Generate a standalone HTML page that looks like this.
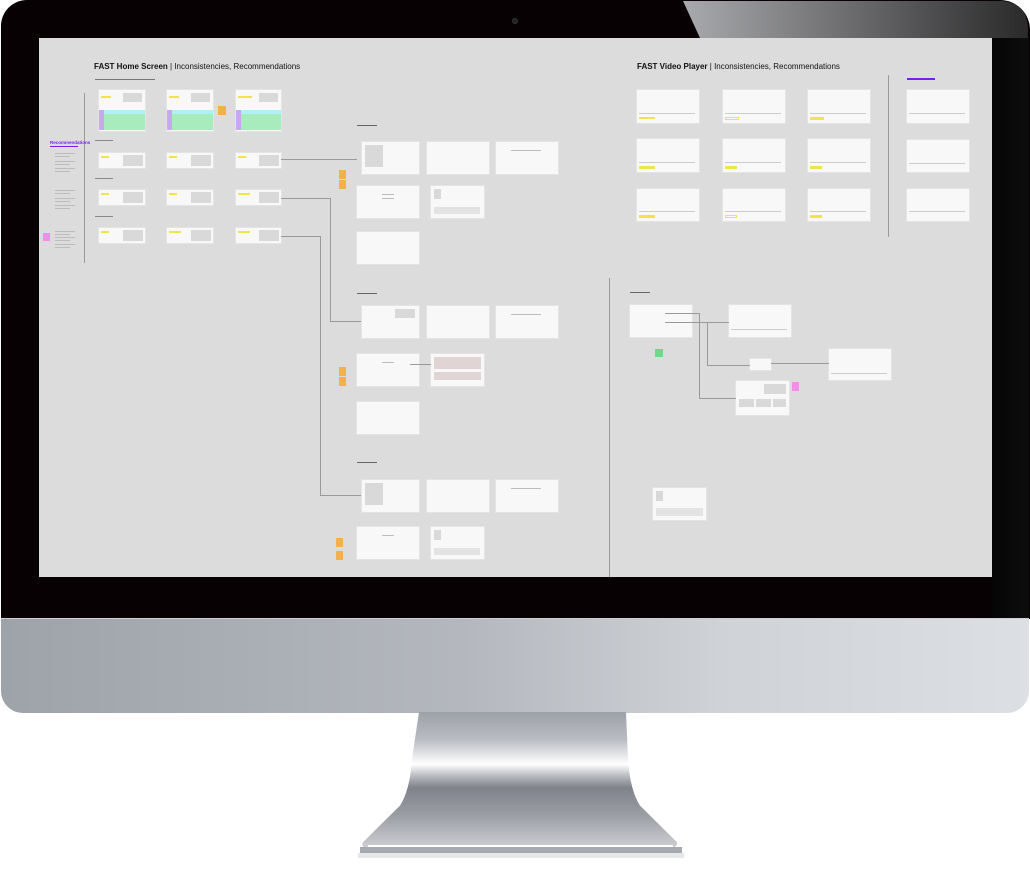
<!DOCTYPE html>
<html><head><meta charset="utf-8">
<style>
*{margin:0;padding:0;box-sizing:border-box}
body{width:1030px;height:888px;background:#fff;position:relative;overflow:hidden;font-family:"Liberation Sans",sans-serif}
.a{position:absolute}
.f{position:absolute;background:#f8f8f8;box-shadow:0 0 0 1px #e4e4e4}
.ph{position:absolute;background:#d9d9d9}
.t{position:absolute;background:#bcbcbc;height:1px}
.y{position:absolute;background:#f1e34a;height:2px}
.ln{position:absolute;background:#9a9a9a}
.so{position:absolute;background:#f5b04a;width:7px;height:9px}
</style></head><body>
<!-- bezel -->
<div class="a" style="left:1px;top:0;width:1029px;height:619px;background:#070104;border-radius:26px 30px 0 0"></div>
<svg class="a" style="left:0;top:0" width="1030" height="40"><defs><linearGradient id="g1" x1="0" x2="1"><stop offset="0" stop-color="#a9aaad"/><stop offset=".5" stop-color="#6a6a6c"/><stop offset="1" stop-color="#2a2a2b"/></linearGradient></defs><path d="M683 1 L1002 1 Q1028 3 1028 30 L1028 38 L700 38 Z" fill="url(#g1)"/></svg>
<div class="a" style="left:992px;top:38px;width:37px;height:580px;background:linear-gradient(90deg,#050505,#0d0d0d)"></div>
<div class="a" style="left:512px;top:18px;width:6px;height:6px;border-radius:50%;background:#222;border:1px solid #333"></div>
<!-- screen -->
<div class="a" style="left:39px;top:38px;width:953px;height:539px;background:#dcdcdc;overflow:hidden"></div>
<!-- chin -->
<div class="a" style="left:1px;top:618px;width:1028px;height:95px;border-radius:0 0 22px 22px;background:linear-gradient(90deg,#9ea3aa,#b4b8be 45%,#cfd2d6 70%,#dcdfe3)"></div>
<div class="a" style="left:1px;top:618px;width:1028px;height:1px;background:#cfcfcf"></div>
<!-- stand -->
<svg class="a" style="left:0;top:712px" width="1030" height="150"><defs><linearGradient id="g2" x1="0" y1="0" x2="0" y2="1"><stop offset="0" stop-color="#9da1a8"/><stop offset=".2" stop-color="#b9bcc2"/><stop offset=".38" stop-color="#ffffff"/><stop offset=".45" stop-color="#c4c6ca"/><stop offset=".55" stop-color="#7f828a"/><stop offset=".75" stop-color="#9a9da4"/><stop offset=".88" stop-color="#b6b8bd"/><stop offset="1" stop-color="#cfd0d3"/></linearGradient></defs>
<path d="M419 0 L626 0 L628 60 Q630 100 640 120 L677 167 Q678 175 665 176 L372 176 Q360 175 363 167 L400 120 Q410 100 412 60 Z" fill="url(#g2)" transform="scale(1,0.78)"/>
<rect x="368" y="133" width="305" height="2" fill="#fff"/>
<rect x="360" y="135" width="322" height="6" fill="#a6a9ae"/>
<rect x="358" y="141" width="326" height="5" fill="#e6e7e9"/>
</svg>

<!-- LEFT SECTION -->
<div class="a" style="left:94px;top:62px;font-size:8px;color:#111;white-space:nowrap"><b>FAST Home Screen</b> | Inconsistencies, Recommendations</div>
<div class="t" style="left:95px;top:79px;width:60px;background:#777"></div>
<div class="ln" style="left:84px;top:93px;width:1px;height:170px"></div>
<div class="a" style="left:50px;top:140px;font-size:4.5px;color:#7a1ff2;font-weight:bold;white-space:nowrap">Recommendations</div>
<div class="t" style="left:50px;top:146px;width:28px;background:#7a1ff2"></div>
<div class="t" style="left:55px;top:153px;width:20px"></div><div class="t" style="left:55px;top:156px;width:15px"></div>
<div class="t" style="left:55px;top:161px;width:20px"></div><div class="t" style="left:55px;top:164px;width:15px"></div>
<div class="t" style="left:55px;top:168px;width:20px"></div><div class="t" style="left:55px;top:171px;width:15px"></div>
<div class="t" style="left:55px;top:190px;width:20px"></div><div class="t" style="left:55px;top:193px;width:15px"></div>
<div class="t" style="left:55px;top:198px;width:20px"></div><div class="t" style="left:55px;top:201px;width:15px"></div>
<div class="t" style="left:55px;top:205px;width:20px"></div><div class="t" style="left:55px;top:208px;width:15px"></div>
<div class="t" style="left:55px;top:231px;width:20px"></div><div class="t" style="left:55px;top:234px;width:15px"></div>
<div class="t" style="left:55px;top:237px;width:20px"></div><div class="t" style="left:55px;top:240px;width:15px"></div>
<div class="t" style="left:55px;top:244px;width:20px"></div><div class="t" style="left:55px;top:247px;width:15px"></div>
<div class="a" style="left:43px;top:233px;width:7px;height:8px;background:#f08ee8"></div>

<!-- row1 -->
<div class="f" style="left:99px;top:90px;width:46px;height:41px"><div class="ph" style="left:24px;top:3px;width:19px;height:9px"></div><div class="y" style="left:2px;top:6px;width:10px"></div><div class="a" style="left:0;top:20px;width:46px;height:4px;background:#aef0f4"></div><div class="a" style="left:0;top:24px;width:46px;height:16px;background:#a8ecbe"></div><div class="a" style="left:0;top:20px;width:5px;height:20px;background:#c7a7ef"></div></div>
<div class="f" style="left:167px;top:90px;width:46px;height:41px"><div class="ph" style="left:24px;top:3px;width:19px;height:9px"></div><div class="y" style="left:2px;top:6px;width:10px"></div><div class="a" style="left:0;top:20px;width:46px;height:4px;background:#aef0f4"></div><div class="a" style="left:0;top:24px;width:46px;height:16px;background:#a8ecbe"></div><div class="a" style="left:0;top:20px;width:5px;height:20px;background:#c7a7ef"></div></div>
<div class="f" style="left:236px;top:90px;width:45px;height:41px"><div class="ph" style="left:23px;top:3px;width:19px;height:9px"></div><div class="y" style="left:2px;top:6px;width:14px"></div><div class="a" style="left:0;top:20px;width:45px;height:4px;background:#aef0f4"></div><div class="a" style="left:0;top:24px;width:45px;height:16px;background:#a8ecbe"></div><div class="a" style="left:0;top:20px;width:5px;height:20px;background:#c7a7ef"></div></div>
<div class="so" style="left:218px;top:106px;width:8px"></div>
<!-- rows 2-4 -->
<div class="f" style="left:99px;top:153px;width:46px;height:15px"><div class="ph" style="left:24px;top:2px;width:20px;height:11px"></div><div class="y" style="left:2px;top:3px;width:8px"></div></div>
<div class="f" style="left:167px;top:153px;width:46px;height:15px"><div class="ph" style="left:24px;top:2px;width:20px;height:11px"></div><div class="y" style="left:2px;top:3px;width:8px"></div></div>
<div class="f" style="left:236px;top:153px;width:45px;height:15px"><div class="ph" style="left:23px;top:2px;width:20px;height:11px"></div><div class="y" style="left:2px;top:3px;width:8px"></div></div>
<div class="f" style="left:99px;top:190px;width:46px;height:15px"><div class="ph" style="left:24px;top:2px;width:20px;height:11px"></div><div class="y" style="left:2px;top:3px;width:8px"></div></div>
<div class="f" style="left:167px;top:190px;width:46px;height:15px"><div class="ph" style="left:24px;top:2px;width:20px;height:11px"></div><div class="y" style="left:2px;top:3px;width:8px"></div></div>
<div class="f" style="left:236px;top:190px;width:45px;height:15px"><div class="ph" style="left:23px;top:2px;width:20px;height:11px"></div><div class="y" style="left:2px;top:3px;width:12px"></div></div>
<div class="f" style="left:99px;top:228px;width:46px;height:15px"><div class="ph" style="left:24px;top:2px;width:20px;height:11px"></div><div class="y" style="left:2px;top:3px;width:8px"></div></div>
<div class="f" style="left:167px;top:228px;width:46px;height:15px"><div class="ph" style="left:24px;top:2px;width:20px;height:11px"></div><div class="y" style="left:2px;top:3px;width:12px"></div></div>
<div class="f" style="left:236px;top:228px;width:45px;height:15px"><div class="ph" style="left:23px;top:2px;width:20px;height:11px"></div><div class="y" style="left:2px;top:3px;width:12px"></div></div>
<div class="t" style="left:95px;top:140px;width:18px;background:#888"></div>
<div class="t" style="left:95px;top:178px;width:18px;background:#888"></div>
<div class="t" style="left:95px;top:216px;width:18px;background:#888"></div>

<!-- connectors -->
<div class="ln" style="left:281px;top:159px;width:76px;height:1px"></div>
<div class="ln" style="left:281px;top:198px;width:50px;height:1px"></div>
<div class="ln" style="left:330px;top:198px;width:1px;height:123px"></div>
<div class="ln" style="left:330px;top:321px;width:32px;height:1px"></div>
<div class="ln" style="left:281px;top:236px;width:40px;height:1px"></div>
<div class="ln" style="left:320px;top:236px;width:1px;height:259px"></div>
<div class="ln" style="left:320px;top:495px;width:42px;height:1px"></div>

<!-- MIDDLE GROUPS -->
<div class="t" style="left:357px;top:125px;width:20px;background:#666"></div>
<div class="f" style="left:362px;top:142px;width:57px;height:32px"><div class="ph" style="left:3px;top:3px;width:18px;height:22px"></div></div>
<div class="f" style="left:427px;top:142px;width:62px;height:32px"></div>
<div class="f" style="left:496px;top:142px;width:62px;height:32px"><div class="t" style="left:15px;top:8px;width:30px"></div></div>
<div class="f" style="left:357px;top:186px;width:62px;height:32px"><div class="t" style="left:25px;top:8px;width:12px"></div><div class="t" style="left:25px;top:12px;width:12px"></div></div>
<div class="f" style="left:431px;top:186px;width:53px;height:32px"><div class="ph" style="left:3px;top:3px;width:7px;height:10px"></div><div class="ph" style="left:3px;top:21px;width:46px;height:7px;background:#e3e3e3"></div></div>
<div class="f" style="left:357px;top:232px;width:62px;height:32px"></div>
<div class="so" style="left:339px;top:170px"></div><div class="so" style="left:339px;top:180px"></div>

<div class="t" style="left:357px;top:293px;width:20px;background:#666"></div>
<div class="f" style="left:362px;top:306px;width:57px;height:32px"><div class="ph" style="left:33px;top:3px;width:20px;height:9px"></div></div>
<div class="f" style="left:427px;top:306px;width:62px;height:32px"></div>
<div class="f" style="left:496px;top:306px;width:62px;height:32px"><div class="t" style="left:15px;top:8px;width:30px"></div></div>
<div class="f" style="left:357px;top:354px;width:62px;height:32px"><div class="t" style="left:25px;top:8px;width:12px"></div></div>
<div class="f" style="left:431px;top:354px;width:53px;height:32px"><div class="ph" style="left:3px;top:3px;width:47px;height:12px;background:#e0d4d4"></div><div class="ph" style="left:3px;top:18px;width:47px;height:8px;background:#e0d4d4"></div></div>
<div class="f" style="left:357px;top:402px;width:62px;height:32px"></div>
<div class="so" style="left:339px;top:367px"></div><div class="so" style="left:339px;top:377px"></div>
<div class="ln" style="left:410px;top:364px;width:21px;height:1px"></div>

<div class="t" style="left:357px;top:462px;width:20px;background:#666"></div>
<div class="f" style="left:362px;top:480px;width:57px;height:32px"><div class="ph" style="left:3px;top:3px;width:18px;height:22px"></div></div>
<div class="f" style="left:427px;top:480px;width:62px;height:32px"></div>
<div class="f" style="left:496px;top:480px;width:62px;height:32px"><div class="t" style="left:15px;top:8px;width:30px"></div></div>
<div class="f" style="left:357px;top:527px;width:62px;height:32px"><div class="t" style="left:25px;top:8px;width:12px"></div></div>
<div class="f" style="left:431px;top:527px;width:53px;height:32px"><div class="ph" style="left:3px;top:3px;width:7px;height:10px"></div><div class="ph" style="left:3px;top:21px;width:46px;height:7px;background:#e3e3e3"></div></div>
<div class="so" style="left:336px;top:538px"></div><div class="so" style="left:336px;top:551px"></div>

<div class="ln" style="left:609px;top:278px;width:1px;height:299px"></div>

<!-- RIGHT SECTION -->
<div class="a" style="left:637px;top:62px;font-size:8px;color:#111;white-space:nowrap"><b>FAST Video Player</b> | Inconsistencies, Recommendations</div>
<div class="ln" style="left:888px;top:75px;width:1px;height:162px"></div>
<div class="t" style="left:907px;top:78px;width:28px;height:2px;background:#7a1ff2"></div>

<div class="f" style="left:637px;top:90px;width:62px;height:33px"><div class="y" style="left:2px;top:27px;width:16px"></div><div class="t" style="left:2px;top:23px;width:56px;background:#ccc"></div></div>
<div class="f" style="left:723px;top:90px;width:62px;height:33px"><div class="y" style="left:2px;top:27px;width:14px;height:3px;background:none;border:1px solid #f1e34a"></div><div class="t" style="left:2px;top:23px;width:56px;background:#ccc"></div></div>
<div class="f" style="left:808px;top:90px;width:62px;height:33px"><div class="y" style="left:2px;top:27px;width:14px;height:3px"></div><div class="t" style="left:2px;top:23px;width:56px;background:#ccc"></div></div>
<div class="f" style="left:637px;top:139px;width:62px;height:33px"><div class="y" style="left:2px;top:27px;width:16px;height:3px"></div><div class="t" style="left:2px;top:23px;width:56px;background:#ccc"></div></div>
<div class="f" style="left:723px;top:139px;width:62px;height:33px"><div class="y" style="left:2px;top:27px;width:12px;height:3px"></div><div class="t" style="left:2px;top:23px;width:56px;background:#ccc"></div></div>
<div class="f" style="left:808px;top:139px;width:62px;height:33px"><div class="y" style="left:2px;top:27px;width:12px;height:3px"></div><div class="t" style="left:2px;top:23px;width:56px;background:#ccc"></div></div>
<div class="f" style="left:637px;top:189px;width:62px;height:32px"><div class="y" style="left:2px;top:26px;width:16px;height:3px"></div><div class="t" style="left:2px;top:22px;width:56px;background:#ccc"></div></div>
<div class="f" style="left:723px;top:189px;width:62px;height:32px"><div class="y" style="left:2px;top:26px;width:12px;height:3px;background:none;border:1px solid #f1e34a"></div><div class="t" style="left:2px;top:22px;width:56px;background:#ccc"></div></div>
<div class="f" style="left:808px;top:189px;width:62px;height:32px"><div class="y" style="left:2px;top:26px;width:12px;height:3px"></div><div class="t" style="left:2px;top:22px;width:56px;background:#ccc"></div></div>

<div class="f" style="left:907px;top:90px;width:62px;height:33px"><div class="t" style="left:2px;top:23px;width:56px;background:#ccc"></div></div>
<div class="f" style="left:907px;top:140px;width:62px;height:32px"><div class="t" style="left:2px;top:23px;width:56px;background:#ccc"></div></div>
<div class="f" style="left:907px;top:189px;width:62px;height:32px"><div class="t" style="left:2px;top:22px;width:56px;background:#ccc"></div></div>

<!-- lower right -->
<div class="t" style="left:630px;top:292px;width:20px;background:#666"></div>
<div class="f" style="left:630px;top:305px;width:62px;height:32px"></div>
<div class="f" style="left:729px;top:305px;width:62px;height:32px"><div class="t" style="left:2px;top:24px;width:56px;background:#ccc"></div></div>
<div class="f" style="left:750px;top:359px;width:21px;height:11px"></div>
<div class="f" style="left:829px;top:349px;width:62px;height:31px"><div class="t" style="left:2px;top:24px;width:56px;background:#ccc"></div></div>
<div class="f" style="left:736px;top:381px;width:53px;height:34px"><div class="ph" style="left:28px;top:3px;width:22px;height:10px"></div><div class="ph" style="left:3px;top:18px;width:15px;height:8px"></div><div class="ph" style="left:20px;top:18px;width:15px;height:8px"></div><div class="ph" style="left:37px;top:18px;width:13px;height:8px"></div></div>
<div class="a" style="left:655px;top:349px;width:8px;height:8px;background:#6fd98a"></div>
<div class="a" style="left:792px;top:382px;width:7px;height:9px;background:#f08ee8"></div>
<div class="ln" style="left:665px;top:313px;width:34px;height:1px"></div>
<div class="ln" style="left:665px;top:322px;width:64px;height:1px"></div>
<div class="ln" style="left:699px;top:313px;width:1px;height:85px"></div>
<div class="ln" style="left:699px;top:398px;width:37px;height:1px"></div>
<div class="ln" style="left:707px;top:322px;width:1px;height:43px"></div>
<div class="ln" style="left:707px;top:365px;width:43px;height:1px"></div>
<div class="ln" style="left:771px;top:363px;width:58px;height:1px"></div>
<div class="f" style="left:653px;top:488px;width:53px;height:32px"><div class="ph" style="left:3px;top:3px;width:7px;height:10px"></div><div class="ph" style="left:3px;top:20px;width:47px;height:8px;background:#e3e3e3"></div></div>
</body></html>
